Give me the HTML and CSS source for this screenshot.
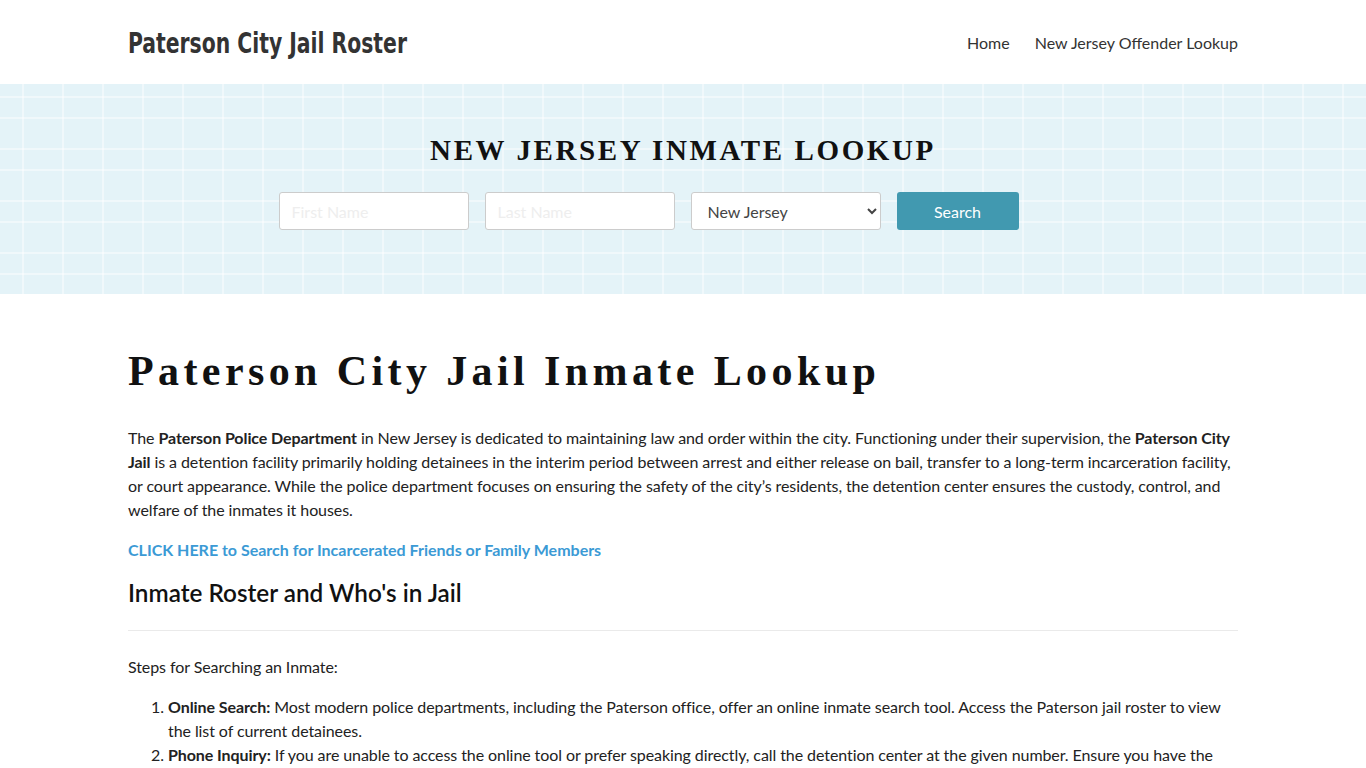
FILE: index.html
```html
<!DOCTYPE html>
<html lang="en">
<head>
<meta charset="utf-8">
<title>Paterson City Jail Roster</title>
<link rel="stylesheet" href="styles.css">
</head>
<body>
<header class="site-header">
  <div class="container header-inner">
    <a class="brand" href="#">Paterson City Jail Roster</a>
    <nav class="nav">
      <a href="#">Home</a>
      <a href="#">New Jersey Offender Lookup</a>
    </nav>
  </div>
</header>
<section class="hero">
  <h2 class="hero-title">NEW JERSEY INMATE LOOKUP</h2>
  <form class="search-form">
    <input class="field" type="text" placeholder="First Name">
    <input class="field" type="text" placeholder="Last Name">
    <select class="field select">
      <option>New Jersey</option>
    </select>
    <button class="btn" type="button">Search</button>
  </form>
</section>
<main class="container content">
  <h1 class="page-title">Paterson City Jail Inmate Lookup</h1>
  <p>The <b>Paterson Police Department</b> in New Jersey is dedicated to maintaining law and order within the city. Functioning under their supervision, the <b>Paterson City Jail</b> is a detention facility primarily holding detainees in the interim period between arrest and either release on bail, transfer to a long-term incarceration facility, or court appearance. While the police department focuses on ensuring the safety of the city’s residents, the detention center ensures the custody, control, and welfare of the inmates it houses.</p>
  <p><a class="cta" href="#">CLICK HERE to Search for Incarcerated Friends or Family Members</a></p>
  <h2 class="section-title">Inmate Roster and Who's in Jail</h2>
  <hr class="rule">
  <p>Steps for Searching an Inmate:</p>
  <ol class="steps">
    <li><b>Online Search:</b> Most modern police departments, including the Paterson office, offer an online inmate search tool. Access the Paterson jail roster to view the list of current detainees.</li>
    <li><b>Phone Inquiry:</b> If you are unable to access the online tool or prefer speaking directly, call the detention center at the given number. Ensure you have the inmate's full name and date of birth ready to speed up the search.</li>
  </ol>
</main>
</body>
</html>
```
FILE: styles.css
```css
* { box-sizing: border-box; }
html, body { margin: 0; padding: 0; }
body {
  font-family: Lato, "Open Sans", sans-serif;
  font-size: 16px;
  line-height: 24px;
  color: #222;
  background: #fff;
}
.container {
  width: 1110px;
  margin: 0 auto;
}
.site-header { height: 84px; background: #fff; }
.header-inner {
  height: 84px;
  display: flex;
  align-items: center;
  justify-content: space-between;
}
.brand {
  display: inline-block;
  font-family: "DejaVu Sans", sans-serif;
  font-stretch: condensed;
  font-weight: 700;
  font-size: 29px;
  color: #333;
  text-decoration: none;
  transform: scaleX(0.78);
  transform-origin: left center;
  position: relative;
  top: 1px;
}
.nav { display: flex; gap: 25px; margin-top: 2px; }
.nav a {
  color: #333;
  text-decoration: none;
  font-size: 16px;
}
.hero {
  height: 210px;
  background-color: #e4f3f8;
  background-image:
    repeating-linear-gradient(90deg, transparent 0, transparent 22px, rgba(255,255,255,0.45) 22px, rgba(255,255,255,0.45) 24px, transparent 24px, transparent 40px),
    linear-gradient(180deg, transparent 0, transparent 12px, rgba(255,255,255,0.45) 12px, rgba(255,255,255,0.45) 14px, transparent 14px, transparent 33px, rgba(255,255,255,0.45) 33px, rgba(255,255,255,0.45) 35px, transparent 35px);
  background-size: 40px 100%, 100% 52px;
  background-repeat: repeat-x, repeat-y;
  display: flex;
  flex-direction: column;
  align-items: center;
  padding-top: 48px;
}
.hero-title {
  margin: 0;
  font-family: "Liberation Serif", "Times New Roman", serif;
  font-weight: 700;
  font-size: 29px;
  line-height: 36px;
  letter-spacing: 2.6px;
  color: #111;
}
.search-form {
  display: flex;
  gap: 16px;
  margin-top: 24px;
  margin-right: 69px;
}
.field {
  width: 190px;
  height: 38px;
  border: 1px solid #ccc;
  border-radius: 3px;
  background: #fff;
  padding: 0 12px;
  font-family: Lato, sans-serif;
  font-size: 16px;
  color: #444;
}
.field::placeholder { color: #eee; }
.select { padding-left: 12px; }
.btn {
  width: 122px;
  height: 38px;
  border: 0;
  border-radius: 3px;
  background: #4199b0;
  color: #fff;
  font-family: Lato, sans-serif;
  font-size: 16px;
}
.content { padding-top: 52px; }
.page-title {
  margin: 0 0 30px;
  font-family: "Liberation Serif", "Times New Roman", serif;
  font-weight: 700;
  font-size: 42px;
  line-height: 50px;
  letter-spacing: 4.4px;
  color: #111;
}
p, .steps li { letter-spacing: -0.08px; }
p { margin: 0 0 16px; }
b { font-weight: 700; }
.cta {
  color: #3b9ad5;
  font-weight: 700;
  text-decoration: none;
  letter-spacing: 0;
}
.section-title {
  margin: 14px 0 0;
  font-family: Lato, sans-serif;
  font-weight: 600;
  font-size: 24.3px;
  line-height: 30px;
  color: #111;
}
.rule {
  border: 0;
  border-top: 1px solid #eaeaea;
  margin: 22px 0 24px;
}
.steps { margin: 0; padding-left: 40px; }
```
